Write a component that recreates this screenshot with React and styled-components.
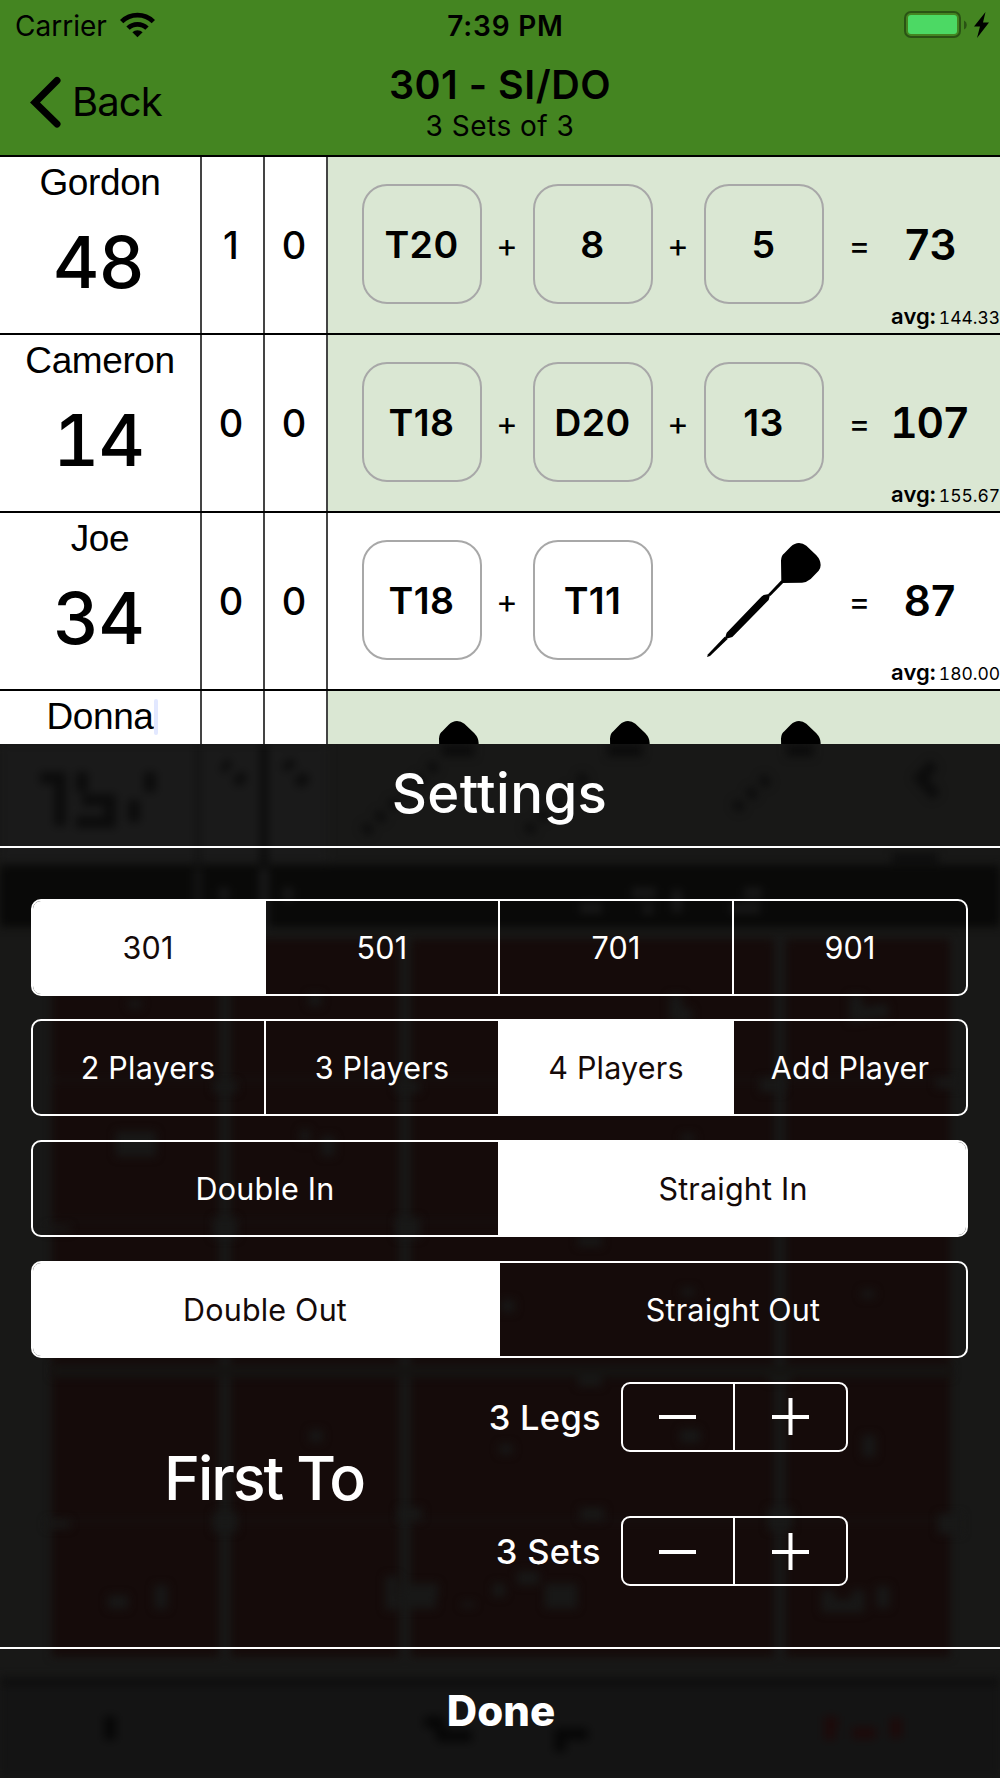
import React, { useState } from 'react'
import styled, { createGlobalStyle } from 'styled-components'

const GlobalStyle = createGlobalStyle`
  * {
    box-sizing: border-box;
  }

  body {
    margin: 0;
    background: #141414;
    font-family: Inter, 'Liberation Sans', sans-serif;
    color: #000;
  }

  button {
    padding: 0;
    border: 0;
    background: none;
    font: inherit;
    color: inherit;
  }
`

const Phone = styled.div`
  width: 1000px;
  height: 1778px;
  overflow: hidden;
`

const Game = styled.main`
  height: 744px;
  overflow: hidden;
  background: #fff;
`

const Header = styled.header`
  height: 157px;
  background: #448521;
  border-bottom: 2px solid #000;
`

const StatusBar = styled.div`
  display: grid;
  grid-template-columns: 1fr auto 1fr;
  align-items: center;
  height: 51px;
  padding: 0 11px 0 15px;
  font-size: 28px;
`

const Carrier = styled.div`
  display: flex;
  align-items: center;
  gap: 13px;

  svg {
    margin-bottom: 2px;
  }
`

const Clock = styled.div`
  font-weight: 600;
  letter-spacing: 0.8px;
  padding-left: 7px;
`

const Power = styled.div`
  display: flex;
  justify-content: flex-end;
  align-items: center;
  padding-bottom: 2px;
`

const Battery = styled.div`
  width: 57px;
  height: 27px;
  padding: 2px;
  border: 2px solid #2a5314;
  border-radius: 7px;

  &::before {
    content: '';
    display: block;
    height: 100%;
    border-radius: 3px;
    background: #4cd964;
  }
`

const NavBar = styled.nav`
  display: grid;
  grid-template-columns: 1fr auto 1fr;
  height: 104px;
`

const BackButton = styled.button`
  display: flex;
  align-items: center;
  gap: 10px;
  padding: 0 0 3px 30px;
  font-size: 40px;
  letter-spacing: -0.9px;
`

const Title = styled.h1`
  margin: 10px 0 0;
  font-size: 39.5px;
  font-weight: 600;
  line-height: 48px;
  text-align: center;
  letter-spacing: 0.5px;
`

const Subtitle = styled.div`
  font-size: 28px;
  line-height: 34px;
  text-align: center;
  letter-spacing: 0.5px;
`

const Row = styled.section`
  display: grid;
  grid-template-columns: 202px 63px 63px 1fr;
  height: 178px;
  border-bottom: 2px solid #000;
`

const Player = styled.div`
  border-right: 2px solid #444;
  text-align: center;
`

const Name = styled.div`
  display: flex;
  justify-content: center;
  align-items: center;
  height: 52px;
  margin-bottom: 13px;
  font-family: 'Liberation Sans', Arial, sans-serif;
  font-size: 37px;
  letter-spacing: -0.4px;
`

const Caret = styled.span`
  width: 4px;
  height: 36px;
  margin-right: -4px;
  border-radius: 2px;
  background: #e2e8ff;
`

const Score = styled.div`
  padding-right: 3px;
  font-size: 71.5px;
  font-weight: 500;
  line-height: 80px;
  font-variant-numeric: tabular-nums;
  letter-spacing: -0.8px;
`

const Tally = styled.div`
  display: flex;
  justify-content: center;
  align-items: center;
  padding: 0 3px 1px 0;
  border-right: 2px solid #444;
  font-size: 38px;
  font-weight: 500;
`

const Turn = styled.div`
  padding: 27px 0 0 34px;
  background: ${p => (p.$done ? '#dae7d3' : '#fff')};
`

const Throws = styled.div`
  display: grid;
  grid-template-columns: 120px 51px 120px 51px 120px 72px 67px;
  align-items: center;
  height: 120px;
  text-align: center;
`

const Throw = styled.div`
  height: 120px;
  padding-right: 1px;
  border: 2px solid #a8a8a8;
  border-radius: 25px;
  font-size: 37.5px;
  font-weight: 600;
  line-height: 117px;
  letter-spacing: 0.4px;
`

const Operator = styled.div`
  padding: 2px 1px 0 0;
  font-size: 33px;
`

const Total = styled.div`
  font-size: 42.5px;
  font-weight: 600;
  font-variant-numeric: tabular-nums;
  letter-spacing: -1.4px;
  margin: 0 -10px;
`

const Average = styled.div`
  display: flex;
  justify-content: flex-end;
  align-items: baseline;
  gap: 3px;
  font-size: 17.5px;
  line-height: 25px;
  letter-spacing: -0.05px;
  font-variant-numeric: tabular-nums;

  b {
    font-size: 22px;
    font-weight: 600;
    letter-spacing: 0.1px;
  }
`

const Sheet = styled.section`
  position: relative;
  height: 1034px;
  overflow: hidden;
  background: #181817;
  color: #fff;
`

const Backdrop = styled.div`
  position: absolute;
  inset: 0;
  padding: 195px 48px 0 52px;

  > svg {
    position: absolute;
    inset: 0;
    filter: blur(4.5px);
  }
`

const Keys = styled.div`
  display: grid;
  grid-template-columns: 167px 168px 363px 164px;
  grid-template-rows: 137px 137px 142px 147px 132px;
  gap: 5px 12px;
  filter: blur(4px);

  i {
    background: #150b0a;
    box-shadow: 0 3px 0 #150b0a;
  }
`

const SheetBody = styled.div`
  position: relative;
`

const SheetTitle = styled.h2`
  height: 104px;
  margin: 0;
  padding-right: 1px;
  border-bottom: 2px solid #fff;
  font-size: 54.5px;
  font-weight: 500;
  line-height: 98px;
  text-align: center;
  letter-spacing: 0.4px;
`

const Options = styled.div`
  display: flex;
  flex-direction: column;
  gap: 23.8px;
  padding: 50.5px 32px 0 31px;
`

const Segments = styled.div`
  display: flex;
  height: 97px;
  border: 2px solid #fff;
  border-radius: 10px;
  overflow: hidden;
`

const Segment = styled.button`
  flex: 1;
  font-size: 30.5px;
  letter-spacing: 0.2px;
  background: ${p => (p.$on ? '#fff' : 'transparent')};
  color: ${p => (p.$on ? '#150a09' : '#fff')};

  &:first-child {
    margin-left: -1px;
  }

  &:not(:last-child) {
    border-right: 2px solid #fff;
  }
`

const FirstTo = styled.div`
  display: flex;
  height: 289px;
  padding-top: 24px;
`

const FirstToTitle = styled.div`
  width: 364px;
  height: 204px;
  font-size: 61px;
  font-weight: 500;
  line-height: 193px;
  text-align: right;
  letter-spacing: -2.1px;
`

const Steppers = styled.div`
  display: flex;
  flex-direction: column;
  gap: 64.5px;
`

const StepperRow = styled.div`
  display: flex;
  align-items: center;
  gap: 20px;
`

const StepperLabel = styled.div`
  width: 237px;
  padding-top: 1px;
  font-size: 34.5px;
  font-weight: 500;
  text-align: right;
  letter-spacing: 0.3px;
`

const Stepper = styled.div`
  display: flex;
  width: 227px;
  height: 70px;
  border: 2px solid #fff;
  border-radius: 9px;

  button {
    flex: 1;
    display: flex;
    justify-content: center;
    align-items: center;
  }

  button:first-child {
    margin-left: -1px;
    border-right: 2px solid #fff;
  }
`

const DoneButton = styled.button`
  display: block;
  width: 100%;
  height: 131px;
  padding: 0 0 6px 2px;
  border-top: 2px solid #fff;
  font-size: 42px;
  font-weight: 800;
`

const players = [
  { name: 'Gordon', score: 48, sets: 1, legs: 0, darts: ['T20', '8', '5'], total: 73, avg: '144.33' },
  { name: 'Cameron', score: 14, sets: 0, legs: 0, darts: ['T18', 'D20', '13'], total: 107, avg: '155.67' },
  { name: 'Joe', score: 34, sets: 0, legs: 0, darts: ['T18', 'T11', null], total: 87, avg: '180.00', active: true },
  { name: 'Donna', darts: [null, null, null], editing: true },
]

const WifiIcon = () => (
  <svg width="35" height="26" viewBox="0 0 34 25">
    <path d="M17 24.5l-5-5a7.2 7.2 0 0 1 10 0z" />
    <path d="M7.8 15.6a13 13 0 0 1 18.4 0" fill="none" stroke="#000" strokeWidth="4.6" />
    <path d="M1.6 9.2a22 22 0 0 1 30.8 0" fill="none" stroke="#000" strokeWidth="4.6" />
  </svg>
)

const BatteryTip = () => (
  <svg width="28" height="26" viewBox="0 0 28 26">
    <path d="M3 8.5a5 5 0 0 1 0 9z" fill="#2a5314" />
    <path d="M24.5 0L13 14.5h6L16 26 28 10.5h-6z" />
  </svg>
)

const Chevron = () => (
  <svg width="32" height="52" viewBox="0 0 32 52">
    <path
      d="M27 4.5L5 26.5l22 21.5"
      fill="none"
      stroke="#000"
      strokeWidth="7"
      strokeLinecap="round"
    />
  </svg>
)

const Dart = () => (
  <svg width="120" height="120" viewBox="612 120 360 360">
    <path d="M844 249L843 182Q844 166 853 160L872 140Q884 129 897 129Q909 129 919 137L949 166Q962 180 962 195Q962 205 956 212L932 237Q920 247 906 248Z" />
    <path d="M844 241L850 248 811 288 805 282Z" />
    <path d="M811 281L806 300 800 306 697 411 674 418 680 398 784 290 791 285Z" />
    <path d="M674 410L683 417 630 468 621 471 624 463Z" />
  </svg>
)

const Minus = () => (
  <svg width="37" height="37" viewBox="0 0 37 37">
    <path d="M0 19h37" stroke="#fff" strokeWidth="4" />
  </svg>
)

const Plus = () => (
  <svg width="37" height="37" viewBox="0 0 37 37">
    <path d="M0 19h37M18.5 0v37" stroke="#fff" strokeWidth="4" />
  </svg>
)

// What shows through the sheet: the rest of the board, out of focus
const Shadows = () => (
  <svg width="1000" height="1034" viewBox="0 744 1000 1034" fill="none">
    <path d="M-10 730h338v132h-338z" fill="#1a1a1a" />
    <path d="M-10 865h1020v62h-1020z" fill="#090908" />
    <g stroke="#0c0c0c">
      <path d="M198 735v130" strokeWidth="6" stroke="#131313" />
      <path d="M264 735v130" strokeWidth="8" />
      <path d="M40 778h20M60 772v54M82 772v20M82 800h28v22h-34M150 772v20M134 800v22" strokeWidth="12" />
      <path d="M223 764l6 4M236 776l8 6M286 762l6 6M298 776l8 8" strokeWidth="13" />
      <path d="M442 738h32v18h-32zM608 738h34v18h-34zM787 738h26v18h-26z" fill="#0c0c0c" />
      <path d="M436 764l-76 72M586 776l-60 56M768 778l-34 32" strokeWidth="11" strokeDasharray="9 9" />
      <path d="M934 764l-14 14 16 18" strokeWidth="11" />
      <path d="M892 858h46" strokeWidth="9" />
    </g>
    <g stroke="#181818" strokeWidth="10">
      <path d="M264 868v60M224 888v12M288 888v12" />
      <path d="M198 868v60" stroke="#121212" />
      <path d="M580 908h22M632 893h24M648 904v10M677 890v22M730 908h30M744 893h18" />
    </g>
    <g stroke="#181817" strokeWidth="13">
      <path d="M135 1000v8M315 994v12M676 995v20h16M856 995v20l32-5" />
      <path d="M116 1138h40M116 1150h40M300 1136h10M328 1136v20M688 1134v8" />
      <path d="M508 1300v12M688 1288v8M868 1290v8" />
      <path d="M316 1430v12M506 1444v10M680 1436h20M869 1435v22" />
      <path d="M108 1602h20M161 1585v24M392 1576v34M402 1590h36M400 1602h36M468 1602v5M493 1590h12M517 1578h22M545 1590h32M545 1602h32M828 1590v16h30v-16M883 1586v22" />
      <path d="M58 1226v6M225 1218v20M408 1218v20M590 1236v10M590 1370v16M780 1370v12" strokeWidth="24" />
      <path d="M225 1512v20M410 1508v12M592 1508v12M780 1508v22M950 1514v20M58 1520v8M225 1082v10M408 1082v10M772 1078v14M948 1078v10" strokeWidth="24" />
      <path d="M52 1371h900" strokeWidth="12" stroke="#151412" />
    </g>
    <path d="M-10 1677h1020v120h-1020z" fill="#141414" />
    <path d="M-10 1682h1020" stroke="#0e0e0e" strokeWidth="8" />
    <path d="M110 1716v24M424 1722h14l4 14h30M560 1752v-18h28" stroke="#070707" strokeWidth="12" />
    <path d="M830 1740v-18h8M852 1733h24M896 1718v20" stroke="#1c0a0a" strokeWidth="12" />
  </svg>
)

const PlayerRow = ({ player }) => {
  const [first, second, third] = player.darts.map((dart, i) =>
    dart ? <Throw key={i}>{dart}</Throw> : <Dart key={i} />
  )
  return (
    <Row>
      <Player>
        <Name>
          {player.name}
          {player.editing && <Caret />}
        </Name>
        <Score>{player.score}</Score>
      </Player>
      <Tally>{player.sets}</Tally>
      <Tally>{player.legs}</Tally>
      <Turn $done={!player.active}>
        <Throws>
          {first}
          <Operator>{player.darts[1] && '+'}</Operator>
          {second}
          <Operator>{player.darts[2] && '+'}</Operator>
          {third}
          <Operator>{player.total && '='}</Operator>
          <Total>{player.total}</Total>
        </Throws>
        {player.avg && (
          <Average>
            <b>avg:</b>
            {player.avg}
          </Average>
        )}
      </Turn>
    </Row>
  )
}

const SegmentedControl = ({ items, initial }) => {
  const [selected, setSelected] = useState(initial)
  return (
    <Segments>
      {items.map(item => (
        <Segment key={item} $on={item === selected} onClick={() => setSelected(item)}>
          {item}
        </Segment>
      ))}
    </Segments>
  )
}

const Counter = ({ unit }) => {
  const [count, setCount] = useState(3)
  return (
    <StepperRow>
      <StepperLabel>
        {count} {unit}
      </StepperLabel>
      <Stepper>
        <button aria-label={`Fewer ${unit}`} onClick={() => setCount(Math.max(1, count - 1))}>
          <Minus />
        </button>
        <button aria-label={`More ${unit}`} onClick={() => setCount(count + 1)}>
          <Plus />
        </button>
      </Stepper>
    </StepperRow>
  )
}

const App = () => (
  <Phone>
    <GlobalStyle />
    <Game>
      <Header>
        <StatusBar>
          <Carrier>
            Carrier
            <WifiIcon />
          </Carrier>
          <Clock>7:39 PM</Clock>
          <Power>
            <Battery />
            <BatteryTip />
          </Power>
        </StatusBar>
        <NavBar>
          <BackButton>
            <Chevron />
            Back
          </BackButton>
          <div>
            <Title>301 - SI/DO</Title>
            <Subtitle>3 Sets of 3</Subtitle>
          </div>
        </NavBar>
      </Header>
      {players.map(player => (
        <PlayerRow key={player.name} player={player} />
      ))}
    </Game>
    <Sheet>
      <Backdrop>
        <Keys>
          {Array.from({ length: 20 }, (_, i) => (
            <i key={i} />
          ))}
        </Keys>
        <Shadows />
      </Backdrop>
      <SheetBody>
        <SheetTitle>Settings</SheetTitle>
        <Options>
          <SegmentedControl items={['301', '501', '701', '901']} initial="301" />
          <SegmentedControl
            items={['2 Players', '3 Players', '4 Players', 'Add Player']}
            initial="4 Players"
          />
          <SegmentedControl items={['Double In', 'Straight In']} initial="Straight In" />
          <SegmentedControl items={['Double Out', 'Straight Out']} initial="Double Out" />
        </Options>
        <FirstTo>
          <FirstToTitle>First To</FirstToTitle>
          <Steppers>
            <Counter unit="Legs" />
            <Counter unit="Sets" />
          </Steppers>
        </FirstTo>
        <DoneButton>Done</DoneButton>
      </SheetBody>
    </Sheet>
  </Phone>
)

export default App
